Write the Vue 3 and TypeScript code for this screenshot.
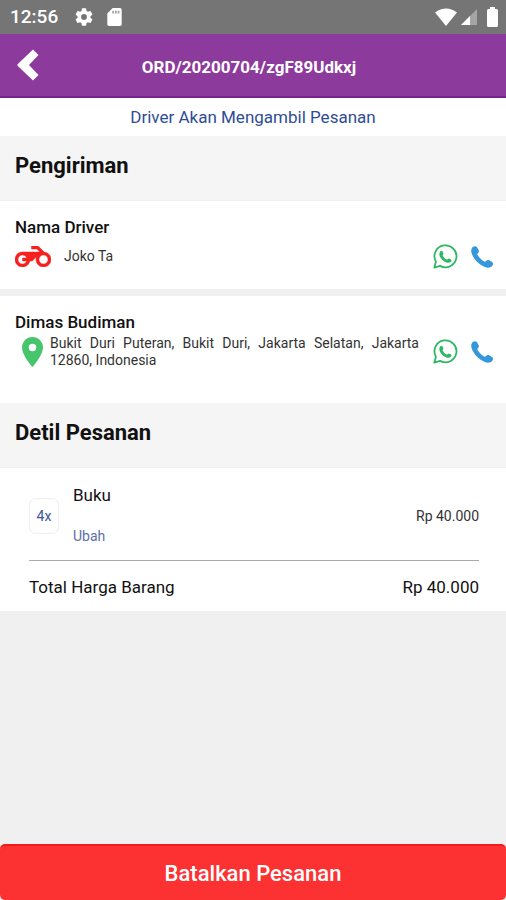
<script setup lang="ts">
interface Contact {
  title: string
  detail: string
  kind: 'driver' | 'recipient'
}

interface OrderItem {
  name: string
  quantity: number
  price: number
}

const orderCode = 'ORD/20200704/zgF89Udkxj'

const contacts: Contact[] = [
  { title: 'Nama Driver', detail: 'Joko Ta', kind: 'driver' },
  {
    title: 'Dimas Budiman',
    detail: 'Bukit Duri Puteran, Bukit Duri, Jakarta Selatan, Jakarta 12860, Indonesia',
    kind: 'recipient',
  },
]

const items: OrderItem[] = [{ name: 'Buku', quantity: 4, price: 40000 }]
const total = items.reduce((sum, item) => sum + item.price, 0)

const rupiah = (value: number): string =>
  'Rp ' + value.toString().replace(/\B(?=(\d{3})+$)/g, '.')
</script>

<template>
  <div class="screen">
    <div class="status">
      <span class="clock">12:56</span>
      <svg class="gear" viewBox="2 2 20 20" aria-hidden="true">
        <path fill="currentColor" d="M19.14 12.94c.04-.3.06-.61.06-.94s-.02-.64-.07-.94l2.03-1.58a.49.49 0 0 0 .12-.61l-1.92-3.32a.49.49 0 0 0-.59-.22l-2.39.96a7 7 0 0 0-1.62-.94l-.36-2.54A.48.48 0 0 0 13.92 2.4h-3.84a.47.47 0 0 0-.47.41l-.36 2.54c-.59.24-1.13.57-1.62.94l-2.39-.96a.48.48 0 0 0-.59.22L2.74 8.87a.47.47 0 0 0 .12.61l2.03 1.58c-.05.3-.09.63-.09.94s.02.64.07.94l-2.03 1.58a.49.49 0 0 0-.12.61l1.92 3.32c.12.22.37.29.59.22l2.39-.96c.5.38 1.03.7 1.62.94l.36 2.54c.05.24.24.41.48.41h3.84c.24 0 .44-.17.47-.41l.36-2.54a7 7 0 0 0 1.62-.94l2.39.96c.22.08.47 0 .59-.22l1.92-3.32a.47.47 0 0 0-.12-.61zM12 15.2a3.2 3.2 0 1 1 0-6.4 3.2 3.2 0 0 1 0 6.4z" />
      </svg>
      <svg class="card-icon" viewBox="4 2 16 20" aria-hidden="true">
        <path fill="currentColor" d="M18 2h-8L4 8v12a2 2 0 0 0 2 2h12a2 2 0 0 0 2-2V4a2 2 0 0 0-2-2z" />
        <path fill="#757575" opacity=".65" d="M9.5 5h2v3h-2zM12.5 5h2v3h-2zM15.500 5h2v3h-2z" />
      </svg>
      <span class="spacer"></span>
      <svg class="wifi" viewBox="0 0 22 18" aria-hidden="true">
        <path fill="currentColor" d="M0 4.500Q11-3.500 22 4.500L11 18z" />
      </svg>
      <svg class="signal" viewBox="0 0 16 16" aria-hidden="true">
        <path fill="currentColor" opacity=".35" d="M16 0v16H0z" />
        <path fill="currentColor" d="M9 7v9H0z" />
      </svg>
      <svg class="battery" viewBox="0 0 11 20" aria-hidden="true">
        <path fill="currentColor" d="M3 0h5v2h1.500A1.500 1.500 0 0 1 11 3.500v15A1.500 1.500 0 0 1 9.500 20h-8A1.500 1.500 0 0 1 0 18.500v-15A1.500 1.500 0 0 1 1.500 2H3z" />
      </svg>
    </div>

    <header class="topbar">
      <button class="back" type="button" aria-label="Kembali">
        <svg viewBox="0 0 22 32" aria-hidden="true">
          <path fill="currentColor" d="M16 0.500 21.500 6 12 16 21.500 26 16 31.500 0.800 16.900a1.300 1.300 0 0 1 0-1.800z" />
        </svg>
      </button>
      <h1>{{ orderCode }}</h1>
    </header>

    <p class="notice">Driver Akan Mengambil Pesanan</p>

    <main>
      <h2>Pengiriman</h2>
      <section v-for="contact in contacts" :key="contact.title" class="contact" :class="contact.kind">
        <h3>{{ contact.title }}</h3>
        <div class="contact-row">
          <svg v-if="contact.kind === 'driver'" class="bike" viewBox="0 5 24 14" aria-hidden="true">
            <path fill="currentColor" stroke="currentColor" stroke-width=".3" d="M19.44 9.03 15.41 5H11v2h3.59l2 2H5c-2.800 0-5 2.200-5 5s2.200 5 5 5c2.460 0 4.450-1.690 4.900-4h1.650l2.770-2.770c-.21.54-.32 1.140-.32 1.770 0 2.800 2.200 5 5 5s5-2.200 5-5c0-2.650-1.970-4.770-4.560-4.970zM7.820 15C7.400 16.150 6.280 17 5 17c-1.630 0-3-1.370-3-3s1.370-3 3-3c1.280 0 2.400.85 2.820 2H5v2h2.820zM19 17c-1.660 0-3-1.340-3-3s1.340-3 3-3 3 1.340 3 3-1.340 3-3 3z" />
          </svg>
          <svg v-else class="pin" viewBox="5 2 14 20" aria-hidden="true">
            <path fill="currentColor" d="M12 2C8.130 2 5 5.130 5 9c0 5.250 7 13 7 13s7-7.750 7-13c0-3.870-3.130-7-7-7zm0 9.500a2.500 2.500 0 1 1 0-5 2.500 2.500 0 0 1 0 5z" />
          </svg>
          <p class="detail">{{ contact.detail }}</p>
          <div class="actions">
            <button class="whatsapp" type="button" :aria-label="'WhatsApp ' + contact.title">
              <svg viewBox="0 0 25 25" aria-hidden="true">
                <path fill="none" stroke="currentColor" stroke-width="1.800" stroke-linejoin="round" d="M1.300 23.700 2.900 17.700A11 11 0 1 1 7.100 21.900z" />
                <path fill="currentColor" d="M7.200 7.400c.8-.8 1.900-.8 2.300.1l.9 2c.3.7-.9 1.400-.7 2 .9 1.900 2.400 3.300 4.300 4.100.7.200 1.200-1.200 1.900-1l2.100 1c.8.5.6 1.800-.4 2.500-1.500 1.200-3.900.7-6.200-.6-2-1.200-3.600-3-4.500-4.900-.8-1.800-.8-4 .3-5.200z" />
              </svg>
            </button>
            <button class="phone" type="button" :aria-label="'Telepon ' + contact.title">
              <svg viewBox="0 0 22 22" aria-hidden="true">
                <path fill="currentColor" d="M1.400 1.200C2.800.1 4.900-.3 6 1.200L7.600 4c.8 1.500.2 2.500-.8 3.300-.6.500-.6 1-.2 1.800 1.500 2.600 3.600 4.700 6.200 6.200.9.500 1.500.5 2-.1.900-1.200 2-1.700 3.400-1l2.900 1.700c1.300 1 1.200 2.800.1 4.100-1.700 1.900-4.600 2.200-7.500.9C7.900 18.500 3.400 14 1.100 8.600-.2 5.700-.1 3.100 1.400 1.200z" />
              </svg>
            </button>
          </div>
        </div>
      </section>

      <h2>Detil Pesanan</h2>
      <section class="order">
        <div v-for="item in items" :key="item.name" class="item">
          <span class="quantity">{{ item.quantity }}x</span>
          <div class="item-info">
            <span class="item-name">{{ item.name }}</span>
            <a class="edit" href="#">Ubah</a>
          </div>
          <span class="item-price">{{ rupiah(item.price) }}</span>
        </div>
        <div class="total">
          <span>Total Harga Barang</span>
          <span>{{ rupiah(total) }}</span>
        </div>
      </section>
    </main>

    <button class="cancel" type="button">Batalkan Pesanan</button>
  </div>
</template>

<style>
body {
  margin: 0;
  background: #f0f0f0;
}
</style>

<style scoped>
.screen {
  display: flex;
  flex-direction: column;
  min-height: 100vh;
  font-family: Roboto, "Liberation Sans", sans-serif;
  color: #111;
}

h1, h2, h3, p {
  margin: 0;
}

button {
  padding: 0;
  border: 0;
  background: none;
  font-family: inherit;
  cursor: pointer;
}

svg {
  display: block;
}

.status {
  display: flex;
  align-items: center;
  height: 34px;
  padding: 0 8px 0 10px;
  background: #757575;
  color: #fff;
}

.clock {
  margin-right: 17px;
  font-size: 19px;
  font-weight: 500;
  line-height: 36px;
}

.gear {
  width: 18px;
  height: 18px;
  margin-right: 14px;
}

.card-icon {
  width: 15px;
  height: 18px;
}

.spacer {
  flex: 1;
}

.wifi {
  width: 22px;
  height: 18px;
  margin-right: 4px;
}

.signal {
  width: 16px;
  height: 16px;
  margin-right: 10px;
}

.battery {
  width: 11px;
  height: 20px;
}

.topbar {
  display: grid;
  grid-template-columns: 40px 1fr 48px;
  align-items: center;
  height: 62px;
  border-bottom: 2px solid #7c2290;
  background: #8c3a9c;
  color: #fff;
}

.back {
  padding-left: 17px;
  color: inherit;
}

.back svg {
  width: 22px;
  height: 32px;
}

h1 {
  padding-top: 4px;
  font-size: 17px;
  font-weight: 700;
  line-height: 24px;
  text-align: center;
}

.notice {
  background: #fff;
  color: #2f4d94;
  font-size: 17px;
  line-height: 38px;
  text-align: center;
}

h2 {
  padding: 0 15px 4px;
  border-bottom: 1px solid #f0f0f0;
  background: #f5f5f5;
  font-size: 22px;
  font-weight: 700;
  line-height: 60px;
}

.contact {
  padding: 15px 13px 14px 15px;
  background: #fff;
}

.contact + .contact {
  border-top: 7px solid #f0f0f0;
}

.recipient {
  padding-bottom: 33px;
}

h3 {
  font-size: 17px;
  font-weight: 500;
  line-height: 22px;
}

.contact-row {
  display: flex;
  align-items: center;
  min-height: 37px;
}

.bike {
  flex: none;
  width: 36px;
  height: 21px;
  margin-right: 13px;
  color: #f6201f;
}

.pin {
  flex: none;
  width: 21px;
  height: 30px;
  margin: 0 7px;
  color: #47c56c;
}

.detail {
  flex: 1;
  color: #333;
  font-size: 14px;
  line-height: 17px;
  text-align: justify;
}

.actions {
  display: flex;
  flex: none;
  align-items: center;
  gap: 13px;
  margin-left: 14px;
}

.whatsapp {
  color: #2fb863;
}

.whatsapp svg {
  width: 25px;
  height: 25px;
}

.phone {
  color: #3498db;
}

.phone svg {
  width: 22px;
  height: 22px;
}

.order {
  padding: 15px 27px 0 29px;
  background: #fff;
}

.item {
  display: flex;
  align-items: center;
  padding-bottom: 12px;
  border-bottom: 1px solid #aaa;
}

.quantity {
  width: 28px;
  margin-right: 14px;
  border: 1px solid #eee;
  border-radius: 7px;
  color: #3c559b;
  font-size: 14px;
  line-height: 34px;
  text-align: center;
}

.item-info {
  display: flex;
  flex: 1;
  flex-direction: column;
  align-items: flex-start;
  gap: 17px;
}

.item-name {
  font-size: 17px;
  line-height: 24px;
}

.edit {
  color: #5b70ab;
  font-size: 14px;
  line-height: 24px;
  text-decoration: none;
}

.item-price {
  color: #333;
  font-size: 14px;
}

.total {
  display: flex;
  justify-content: space-between;
  padding-top: 2px;
  font-size: 17px;
  line-height: 48px;
}

.cancel {
  height: 56px;
  margin-top: auto;
  border-top: 2px solid #f21a1a;
  border-radius: 5px;
  background: #fc3232;
  color: #fff;
  font-size: 22px;
  font-weight: 500;
}
</style>
